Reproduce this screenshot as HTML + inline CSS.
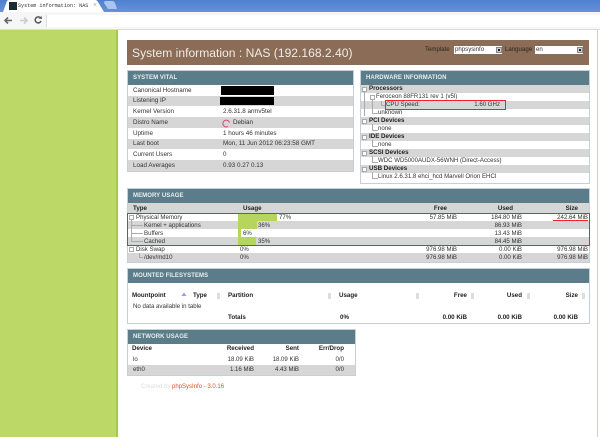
<!DOCTYPE html>
<html><head><meta charset="utf-8"><title>System information: NAS</title>
<style>
html,body{margin:0;padding:0;background:#fff;}
body{width:600px;height:437px;overflow:hidden;position:relative;font-family:"Liberation Sans",sans-serif;font-size:6.1px;color:#333;}
#w{position:absolute;left:0;top:0;width:600px;height:437px;overflow:hidden;filter:blur(.35px);}
.a{position:absolute;}
.t{position:absolute;white-space:nowrap;line-height:8px;height:8px;}
.v{font-size:6.3px;}
.r{text-align:right;}
.b{font-weight:bold;color:#222;font-size:6.2px;}
.box{position:absolute;border:1px solid #c3d0d4;box-sizing:border-box;background:#fff;}
.hd{position:absolute;background:#5a7d89;color:#e6eef0;font-weight:bold;font-size:6px;letter-spacing:.08px;white-space:nowrap;box-sizing:border-box;}
.g{position:absolute;background:#d6d6d6;}
.bar{position:absolute;background:#b5d55c;height:8px;}
.red{position:absolute;border:1px solid #f0222a;box-sizing:border-box;}
.l{position:absolute;background:#aaa;}
.pm{position:absolute;width:5px;height:5px;border:1px solid #aaa;box-sizing:border-box;background:#fff;}
.k{position:absolute;background:#000;}
</style></head><body>
<div id="w">
<!-- browser chrome -->
<div class="a" style="left:0;top:0;width:600px;height:12px;background:linear-gradient(#4f80cf,#6792d9);"></div>
<svg class="a" style="left:0;top:0" width="120" height="13"><path d="M3 12 L7 1 Q7.500 0 9 0 L95 0 Q97 0 98 2 L104 12 Z" fill="#fff"/><path d="M104 3 Q104 1 106 1 L112 1 Q114 1 115 3 L117 9 L108 9 Z" fill="#a9c6ee"/></svg>
<div class="a" style="left:9px;top:2px;width:8px;height:8px;background:#1d2b33;"></div>
<div class="t" style="left:18px;top:2px;font-family:'Liberation Mono',monospace;font-size:5.100px;color:#333;">System information: NAS</div>
<div class="t" style="left:93px;top:2px;color:#aaa;font-size:7px;">×</div>
<div class="a" style="left:0;top:12px;width:600px;height:17px;background:#f6f6f6;border-bottom:1px solid #ddd;box-sizing:content-box;"></div>
<svg class="a" style="left:0;top:12px" width="60" height="17">
<path d="M12 8.500 H5 M8 5.500 L5 8.500 L8 11.500" stroke="#666" stroke-width="1.600" fill="none"/>
<path d="M27 8.500 H20 M24 5.500 L27 8.500 L24 11.500" stroke="#ccc" stroke-width="1.600" fill="none"/>
<path d="M40.500 6 A3 3 0 1 0 41 9" stroke="#555" stroke-width="1.500" fill="none"/><path d="M38.500 6.500 L42 7 L41.500 4 Z" fill="#555"/>
<circle cx="51.500" cy="8.500" r="3" fill="none" stroke="#aaa"/></svg>
<div class="a" style="left:46px;top:15px;width:554px;height:12px;background:#fff;border-left:1px solid #ddd;box-sizing:border-box;"></div>
<!-- sidebar -->
<div class="a" style="left:0;top:30px;width:116px;height:407px;background:#bcd968;"></div>
<div class="a" style="left:116px;top:30px;width:2px;height:407px;background:#a6cb3e;"></div>
<div class="a" style="left:597px;top:30px;width:1px;height:407px;background:#cfdc9c;"></div>
<!-- header -->
<div class="a" style="left:127px;top:40px;width:462px;height:25px;background:#8a6c57;"></div>
<div class="t" style="left:132px;top:46px;height:14px;line-height:14px;font-size:12.100px;color:#f0ebe6;">System information : NAS (192.168.2.40)</div>
<div class="t" style="left:425px;top:46px;color:#2e241c;">Template</div>
<div class="a" style="left:454px;top:46px;width:48px;height:8px;background:#fff;"></div>
<div class="t" style="left:455px;top:46px;color:#333;">phpsysinfo</div>
<div class="a" style="left:496px;top:47px;width:6px;height:6px;background:#ccc;border:1px solid #888;box-sizing:border-box;"></div>
<div class="a" style="left:498px;top:49px;width:2px;height:2px;background:#222;"></div>
<div class="t" style="left:505px;top:46px;color:#2e241c;">Language</div>
<div class="a" style="left:535px;top:46px;width:48px;height:8px;background:#fff;"></div>
<div class="t" style="left:536px;top:46px;color:#333;">en</div>
<div class="a" style="left:577px;top:47px;width:6px;height:6px;background:#ccc;border:1px solid #888;box-sizing:border-box;"></div>
<div class="a" style="left:579px;top:49px;width:2px;height:2px;background:#222;"></div>

<!-- system vital -->
<div class="box" style="left:127px;top:70px;width:227px;height:102px;"></div>
<div class="hd" style="left:128px;top:71px;width:225px;height:14px;padding:3px 5px;line-height:8px;">SYSTEM VITAL</div>
<div class="g" style="left:128px;top:96px;width:225px;height:10px;"></div>
<div class="g" style="left:128px;top:117px;width:225px;height:11px;"></div>
<div class="g" style="left:128px;top:139px;width:225px;height:10px;"></div>
<div class="g" style="left:128px;top:160px;width:225px;height:11px;"></div>
<div class="t v" style="left:133px;top:87px;">Canonical Hostname</div>
<div class="t v" style="left:133px;top:97px;">Listening IP</div>
<div class="t v" style="left:133px;top:108px;">Kernel Version</div>
<div class="t v" style="left:133px;top:119px;">Distro Name</div>
<div class="t v" style="left:133px;top:130px;">Uptime</div>
<div class="t v" style="left:133px;top:140px;">Last boot</div>
<div class="t v" style="left:133px;top:151px;">Current Users</div>
<div class="t v" style="left:133px;top:162px;">Load Averages</div>
<div class="k" style="left:221px;top:86px;width:53px;height:9px;"></div>
<div class="k" style="left:220px;top:97px;width:54px;height:8px;"></div>
<div class="t v" style="left:223px;top:108px;">2.6.31.8 armv5tel</div>
<svg class="a" style="left:222px;top:119px" width="9" height="9"><path d="M6 7.500 A3.400 3.400 0 1 1 7.500 3.500 M2 7 L3.500 8" stroke="#d5476a" stroke-width="1" fill="none"/></svg>
<div class="t v" style="left:233px;top:119px;">Debian</div>
<div class="t v" style="left:223px;top:130px;">1 hours 46 minutes</div>
<div class="t v" style="left:223px;top:140px;">Mon, 11 Jun 2012 06:23:58 GMT</div>
<div class="t v" style="left:223px;top:151px;">0</div>
<div class="t v" style="left:223px;top:162px;">0.93 0.27 0.13</div>

<!-- hardware -->
<div class="box" style="left:360px;top:70px;width:230px;height:114px;"></div>
<div class="hd" style="left:361px;top:71px;width:228px;height:14px;padding:3px 5px;line-height:8px;">HARDWARE INFORMATION</div>
<div class="g" style="left:361px;top:85px;width:228px;height:8px;"></div>
<div class="g" style="left:361px;top:101px;width:228px;height:8px;"></div>
<div class="g" style="left:361px;top:117px;width:228px;height:8px;"></div>
<div class="g" style="left:361px;top:133px;width:228px;height:8px;"></div>
<div class="g" style="left:361px;top:149px;width:228px;height:8px;"></div>
<div class="g" style="left:361px;top:165px;width:228px;height:8px;"></div>
<div class="l" style="left:364px;top:92px;width:1px;height:24px;"></div>
<div class="l" style="left:372px;top:100px;width:1px;height:13px;"></div>
<div class="l" style="left:372px;top:113px;width:6px;height:1px;"></div>
<div class="l" style="left:381px;top:101px;width:1px;height:5px;"></div>
<div class="l" style="left:381px;top:105px;width:5px;height:1px;"></div>
<div class="l" style="left:372px;top:124px;width:1px;height:6px;"></div><div class="l" style="left:372px;top:130px;width:6px;height:1px;"></div>
<div class="l" style="left:372px;top:140px;width:1px;height:6px;"></div><div class="l" style="left:372px;top:146px;width:6px;height:1px;"></div>
<div class="l" style="left:372px;top:156px;width:1px;height:6px;"></div><div class="l" style="left:372px;top:162px;width:6px;height:1px;"></div>
<div class="l" style="left:372px;top:172px;width:1px;height:6px;"></div><div class="l" style="left:372px;top:178px;width:6px;height:1px;"></div>
<div class="pm" style="left:362px;top:87px;"></div><div class="pm" style="left:370px;top:95px;"></div>
<div class="pm" style="left:362px;top:119px;"></div><div class="pm" style="left:362px;top:135px;"></div><div class="pm" style="left:362px;top:151px;"></div><div class="pm" style="left:362px;top:167px;"></div>
<div class="t b" style="left:369px;top:85px;">Processors</div>
<div class="t" style="left:376px;top:93px;">Feroceon 88FR131 rev 1 (v5l)</div>
<div class="t" style="left:386px;top:101px;">CPU Speed:</div>
<div class="t r" style="left:440px;top:101px;width:60px;">1.60 GHz</div>
<div class="t" style="left:378px;top:109px;">unknown</div>
<div class="t b" style="left:369px;top:117px;">PCI Devices</div>
<div class="t" style="left:378px;top:125px;">none</div>
<div class="t b" style="left:369px;top:133px;">IDE Devices</div>
<div class="t" style="left:378px;top:141px;">none</div>
<div class="t b" style="left:369px;top:149px;">SCSI Devices</div>
<div class="t" style="left:378px;top:157px;">WDC WD5000AUDX-56WNH (Direct-Access)</div>
<div class="t b" style="left:369px;top:165px;">USB Devices</div>
<div class="t" style="left:378px;top:173px;">Linux 2.6.31.8 ehci_hcd Marvell Orion EHCI</div>

<!-- memory -->
<div class="box" style="left:127px;top:188px;width:463px;height:75px;"></div>
<div class="hd" style="left:128px;top:189px;width:461px;height:14px;padding:3px 5px;line-height:8px;">MEMORY USAGE</div>
<div class="g" style="left:128px;top:203px;width:461px;height:10px;"></div>
<div class="g" style="left:128px;top:221px;width:461px;height:8px;"></div>
<div class="g" style="left:128px;top:237px;width:461px;height:8px;"></div>
<div class="g" style="left:128px;top:253px;width:461px;height:9px;"></div>
<div class="t b" style="left:133px;top:205px;">Type</div>
<div class="t b" style="left:243px;top:205px;">Usage</div>
<div class="t b r" style="left:407px;top:205px;width:40px;">Free</div>
<div class="t b r" style="left:473px;top:205px;width:40px;">Used</div>
<div class="t b r" style="left:538px;top:205px;width:40px;">Size</div>
<div class="l" style="left:131px;top:219px;width:1px;height:23px;"></div>
<div class="l" style="left:131px;top:225px;width:12px;height:1px;"></div>
<div class="l" style="left:131px;top:233px;width:12px;height:1px;"></div>
<div class="l" style="left:131px;top:241px;width:12px;height:1px;"></div>
<div class="l" style="left:139px;top:253px;width:1px;height:5px;"></div><div class="l" style="left:139px;top:257px;width:4px;height:1px;"></div>
<div class="pm" style="left:129px;top:215px;"></div><div class="pm" style="left:129px;top:247px;"></div>
<div class="bar" style="left:238px;top:213px;width:39px;"></div>
<div class="bar" style="left:238px;top:221px;width:19px;"></div>
<div class="bar" style="left:238px;top:229px;width:3px;"></div>
<div class="bar" style="left:238px;top:237px;width:18px;"></div>
<div class="t" style="left:136px;top:214px;">Physical Memory</div>
<div class="t" style="left:279px;top:214px;">77%</div>
<div class="t r" style="left:407px;top:214px;width:50px;">57.85 MiB</div>
<div class="t r" style="left:472px;top:214px;width:50px;">184.80 MiB</div>
<div class="t r" style="left:538px;top:214px;width:50px;">242.64 MiB</div>
<div class="t" style="left:144px;top:222px;">Kernel + applications</div>
<div class="t" style="left:258px;top:222px;">36%</div>
<div class="t r" style="left:472px;top:222px;width:50px;">86.93 MiB</div>
<div class="t" style="left:144px;top:230px;">Buffers</div>
<div class="t" style="left:243px;top:230px;">6%</div>
<div class="t r" style="left:472px;top:230px;width:50px;">13.43 MiB</div>
<div class="t" style="left:144px;top:238px;">Cached</div>
<div class="t" style="left:258px;top:238px;">35%</div>
<div class="t r" style="left:472px;top:238px;width:50px;">84.45 MiB</div>
<div class="t" style="left:136px;top:246px;">Disk Swap</div>
<div class="t" style="left:240px;top:246px;">0%</div>
<div class="t r" style="left:407px;top:246px;width:50px;">976.98 MiB</div>
<div class="t r" style="left:472px;top:246px;width:50px;">0.00 KiB</div>
<div class="t r" style="left:538px;top:246px;width:50px;">976.98 MiB</div>
<div class="t" style="left:144px;top:254px;">/dev/md10</div>
<div class="t" style="left:240px;top:254px;">0%</div>
<div class="t r" style="left:407px;top:254px;width:50px;">976.98 MiB</div>
<div class="t r" style="left:472px;top:254px;width:50px;">0.00 KiB</div>
<div class="t r" style="left:538px;top:254px;width:50px;">976.98 MiB</div>

<!-- mounted -->
<div class="box" style="left:127px;top:268px;width:463px;height:56px;"></div>
<div class="hd" style="left:128px;top:269px;width:461px;height:14px;padding:3px 5px;line-height:8px;">MOUNTED FILESYSTEMS</div>
<div class="t b" style="left:132px;top:292px;">Mountpoint</div>
<svg class="a" style="left:181px;top:292px" width="6" height="5"><path d="M0.500 4 L3 0.500 L5.500 4 Z" fill="#9a9ae0"/></svg>
<div class="t b" style="left:193px;top:292px;">Type</div>
<div class="t b" style="left:228px;top:292px;">Partition</div>
<div class="t b" style="left:339px;top:292px;">Usage</div>
<div class="t b r" style="left:427px;top:292px;width:40px;">Free</div>
<div class="t b r" style="left:482px;top:292px;width:40px;">Used</div>
<div class="t b r" style="left:538px;top:292px;width:40px;">Size</div>
<div class="a" style="left:217px;top:293px;width:3px;height:6px;background:#ddd;"></div>
<div class="a" style="left:328px;top:293px;width:3px;height:6px;background:#ddd;"></div>
<div class="a" style="left:416px;top:293px;width:3px;height:6px;background:#ddd;"></div>
<div class="a" style="left:471px;top:293px;width:3px;height:6px;background:#ddd;"></div>
<div class="a" style="left:527px;top:293px;width:3px;height:6px;background:#ddd;"></div>
<div class="a" style="left:582px;top:293px;width:3px;height:6px;background:#ddd;"></div>
<div class="t" style="left:133px;top:303px;">No data available in table</div>
<div class="t b" style="left:228px;top:314px;">Totals</div>
<div class="t b" style="left:340px;top:314px;">0%</div>
<div class="t b r" style="left:427px;top:314px;width:40px;">0.00 KiB</div>
<div class="t b r" style="left:482px;top:314px;width:40px;">0.00 KiB</div>
<div class="t b r" style="left:538px;top:314px;width:40px;">0.00 KiB</div>

<!-- network -->
<div class="box" style="left:127px;top:329px;width:229px;height:47px;"></div>
<div class="hd" style="left:128px;top:330px;width:227px;height:14px;padding:3px 5px;line-height:8px;">NETWORK USAGE</div>
<div class="g" style="left:128px;top:365px;width:227px;height:10px;"></div>
<div class="t b" style="left:132px;top:345px;">Device</div>
<div class="t b r" style="left:214px;top:345px;width:40px;">Received</div>
<div class="t b r" style="left:259px;top:345px;width:40px;">Sent</div>
<div class="t b r" style="left:304px;top:345px;width:40px;">Err/Drop</div>
<div class="t" style="left:133px;top:356px;">lo</div>
<div class="t r" style="left:214px;top:356px;width:40px;">18.09 KiB</div>
<div class="t r" style="left:259px;top:356px;width:40px;">18.09 KiB</div>
<div class="t r" style="left:304px;top:356px;width:40px;">0/0</div>
<div class="t" style="left:133px;top:366px;">eth0</div>
<div class="t r" style="left:214px;top:366px;width:40px;">1.16 MiB</div>
<div class="t r" style="left:259px;top:366px;width:40px;">4.43 MiB</div>
<div class="t r" style="left:304px;top:366px;width:40px;">0/0</div>

<div class="t" style="left:141px;top:383px;color:#ddd;font-size:6px;">Created by <span style="color:#d9542b;">phpSysInfo - 3.0.16</span></div>
</div>
<!-- annotations -->
<div class="red" style="left:385px;top:100px;width:121px;height:10px;"></div>
<div class="red" style="left:127px;top:213px;width:463px;height:33px;"></div>
<div class="a" style="left:553px;top:220px;width:35px;height:1px;background:#f0222a;"></div>
</body></html>
